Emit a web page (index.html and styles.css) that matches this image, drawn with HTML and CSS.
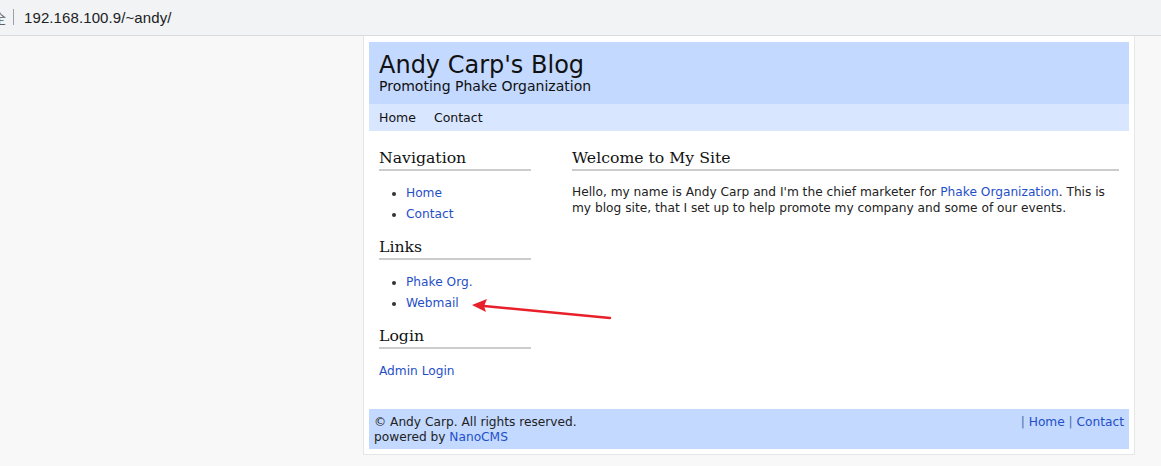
FILE: index.html
```html
<!DOCTYPE html>
<html>
<head>
<meta charset="utf-8">
<title>Andy Carp's Blog</title>
<link rel="stylesheet" href="styles.css">
</head>
<body>
<div class="chrome">
  <span class="chrome-icon">全</span><span class="chrome-sep"></span><span class="url">192.168.100.9/~andy/</span>
</div>
<div class="viewport">
  <div class="page">
    <div class="header">
      <div class="title">Andy Carp's Blog</div>
      <div class="subtitle">Promoting Phake Organization</div>
    </div>
    <div class="nav">
      <a href="#">Home</a>
      <a href="#">Contact</a>
    </div>
    <div class="body">
      <div class="sidebar">
        <h2>Navigation</h2>
        <ul>
          <li><a href="#">Home</a></li>
          <li><a href="#">Contact</a></li>
        </ul>
        <h2>Links</h2>
        <ul>
          <li><a href="#">Phake Org.</a></li>
          <li><a href="#">Webmail</a></li>
        </ul>
        <h2>Login</h2>
        <p class="login"><a href="#">Admin Login</a></p>
      </div>
      <div class="main">
        <h2>Welcome to My Site</h2>
        <p>Hello, my name is Andy Carp and I'm the chief marketer for <a href="#">Phake Organization</a>. This is my blog site, that I set up to help promote my company and some of our events.</p>
      </div>
    </div>
    <div class="footer">
      <div class="foot-left">
        <div>© Andy Carp. All rights reserved.</div>
        <div>powered by <a href="#">NanoCMS</a></div>
      </div>
      <div class="foot-right"><span class="bar">|</span> <a href="#">Home</a> <span class="bar">|</span> <a href="#">Contact</a></div>
    </div>
  </div>
  <svg class="arrow" width="145" height="30" viewBox="0 0 145 30">
    <line x1="140" y1="23" x2="14" y2="11" stroke="#e8202a" stroke-width="2.5" stroke-linecap="round"/>
    <polygon points="2,10 17,4 14,11 16,17" fill="#e8202a"/>
  </svg>
</div>
</body>
</html>
```
FILE: styles.css
```css
* { box-sizing: border-box; }
html, body { margin: 0; padding: 0; }
body {
  background: #f8f8f8;
  font-family: "DejaVu Sans", Verdana, sans-serif;
  width: 1161px;
  height: 466px;
  overflow: hidden;
}
.chrome {
  height: 36px;
  background: #f1f3f4;
  border-bottom: 1px solid #dadce0;
  display: flex;
  align-items: center;
  padding-bottom: 1px;
  font-family: "Liberation Sans", Arial, "Noto Sans CJK SC", sans-serif;
  font-size: 14px;
  color: #202124;
}
.chrome-icon {
  margin-left: -7px;
  color: #5f6368;
  font-size: 13px;
  font-family: "Noto Sans CJK SC", sans-serif;
}
.chrome-sep {
  width: 1px;
  height: 16px;
  background: #9aa0a6;
  margin: 0 10px 0 7px;
}
.url { font-size: 15px; letter-spacing: 0.1px; }
.viewport {
  position: relative;
  padding-left: 363px;
}
.page {
  width: 772px;
  background: #fff;
  border: 1px solid #e6e6e6;
  border-top: none;
  padding: 6px 5px 5px 5px;
}
.header {
  background: #c3d9ff;
  height: 62px;
  padding: 10px 10px 0 10px;
  color: #111;
}
.title {
  font-size: 24px;
  line-height: 26px;
}
.subtitle {
  font-size: 14px;
  line-height: 16px;
}
.nav {
  background: #d9e6ff;
  height: 27px;
  display: flex;
  align-items: center;
  padding-left: 10px;
  gap: 18px;
  font-size: 12.5px;
}
.nav a { color: #111; text-decoration: none; }
a { color: #1f4fc8; text-decoration: none; }
.body {
  display: flex;
  padding: 16px 10px 0 10px;
  gap: 41px;
  height: 278px;
}
.sidebar { width: 152px; flex: none; }
.main { flex: 1; }
h2 {
  font-family: "DejaVu Serif", Georgia, serif;
  font-weight: normal;
  font-size: 15.7px;
  line-height: 22px;
  margin: 0;
  border-bottom: 2px solid #ccc;
  padding-bottom: 0;
  color: #111;
}
.sidebar ul {
  margin: 12px 0 11px 0;
  padding-left: 27px;
  font-size: 12.2px;
  line-height: 21px;
}
.sidebar li { color: #333; }
.login { margin: 14px 0 0 0; font-size: 12.2px; line-height: 16px; }
.main p {
  margin: 13px 0 0 0;
  font-size: 12.2px;
  line-height: 16px;
  color: #222;
}
.footer {
  background: #c3d9ff;
  height: 40px;
  display: flex;
  justify-content: space-between;
  padding: 6px 5px 0 5px;
  font-size: 12.2px;
  line-height: 15px;
  color: #222;
}
.bar { color: #4a6fa8; }
.arrow {
  position: absolute;
  left: 470px;
  top: 259px;
}
```
